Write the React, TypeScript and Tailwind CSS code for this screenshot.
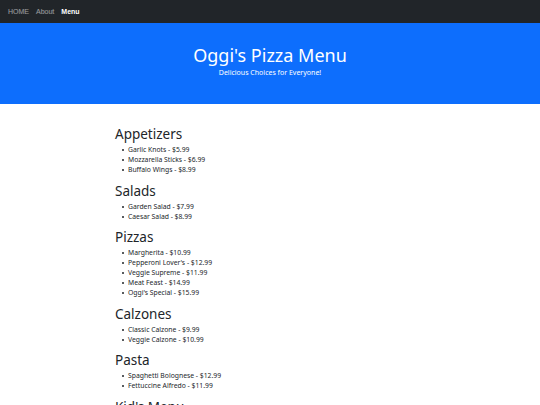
import React from "react";

const sections: { title: string; items: string[] }[] = [
  { title: "Appetizers", items: ["Garlic Knots - $5.99", "Mozzarella Sticks - $6.99", "Buffalo Wings - $8.99"] },
  { title: "Salads", items: ["Garden Salad - $7.99", "Caesar Salad - $8.99"] },
  {
    title: "Pizzas",
    items: [
      "Margherita - $10.99",
      "Pepperoni Lover's - $12.99",
      "Veggie Supreme - $11.99",
      "Meat Feast - $14.99",
      "Oggi's Special - $15.99",
    ],
  },
  { title: "Calzones", items: ["Classic Calzone - $9.99", "Veggie Calzone - $10.99"] },
  { title: "Pasta", items: ["Spaghetti Bolognese - $12.99", "Fettuccine Alfredo - $11.99"] },
  { title: "Kid's Menu", items: ["Kid's Pizza - $6.99", "Chicken Tenders - $6.99"] },
];

export default function App() {
  return (
    <div className="min-h-screen bg-white font-['Noto_Sans',sans-serif] text-[#212529]">
      <nav className="h-[23px] bg-[#212529] flex items-center pt-[1px] px-[8px] gap-[7px] font-['Liberation_Sans',Arial,sans-serif] text-[7px]">
        <span className="text-white/55">HOME</span>
        <span className="text-white/55">About</span>
        <span className="text-white font-semibold">Menu</span>
      </nav>
      <header className="h-[81px] bg-[#0d6efd] text-white flex flex-col items-center pt-[20px]">
        <h1 className="text-[18px] leading-[24px] font-normal">Oggi's Pizza Menu</h1>
        <p className="text-[7px] leading-[10px] mt-[1px]">Delicious Choices for Everyone!</p>
      </header>
      <main className="w-[310px] mx-auto pt-[22px]">
        {sections.map((s) => (
          <section key={s.title} className="mb-[7.5px]">
            <h2 className="text-[13.5px] leading-[16px] mb-[3px]">{s.title}</h2>
            <ul className="pl-[13px] text-[6.8px] leading-[10px]">
              {s.items.map((it) => (
                <li key={it} className="relative">
                  <span className="absolute left-[-6px] top-[4px] w-[2px] h-[2px] rounded-full bg-[#212529]" />
                  {it}
                </li>
              ))}
            </ul>
          </section>
        ))}
      </main>
    </div>
  );
}
